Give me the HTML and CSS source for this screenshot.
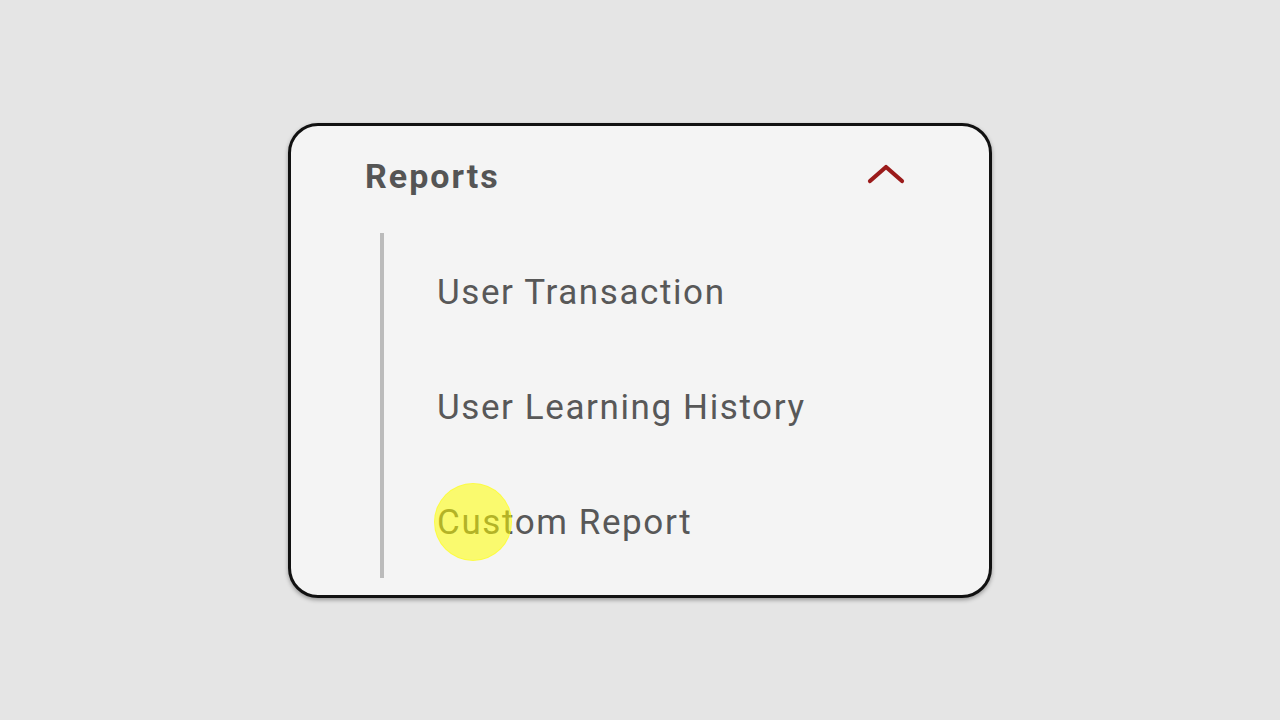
FILE: index.html
```html
<!DOCTYPE html>
<html>
<head>
<meta charset="utf-8">
<link rel="stylesheet" href="styles.css">
</head>
<body>
<div class="card">
  <div class="header">
    <span class="title">Reports</span>
    <svg class="chevron" width="38" height="22" viewBox="0 0 38 22"><path d="M3 18 L19 4 L35 18" fill="none" stroke="#9b1b1b" stroke-width="4.2" stroke-linecap="round" stroke-linejoin="round"/></svg>
  </div>
  <div class="list">
    <div class="item">User Transaction</div>
    <div class="item">User Learning History</div>
    <div class="item last"><span class="label">Custom Report<span class="cursor"></span></span></div>
  </div>
</div>
</body>
</html>
```
FILE: styles.css
```css
html, body { margin: 0; padding: 0; }
body {
  width: 1280px; height: 720px;
  background: #e5e5e5;
  display: flex; align-items: center; justify-content: center;
  font-family: Roboto, "Liberation Sans", sans-serif;
}
.card {
  box-sizing: border-box;
  width: 704px; height: 475px;
  background: #f4f4f4;
  border: 3px solid #111;
  border-radius: 30px;
  box-shadow: 0 2px 4px rgba(0,0,0,0.35);
  display: flex; flex-direction: column;
}
.header {
  box-sizing: border-box;
  display: flex; align-items: center; justify-content: space-between;
  height: 108px;
  padding: 0 84px 6px 74px;
}
.title {
  font-size: 34px; font-weight: 700; color: #555;
  letter-spacing: 2px;
}
.chevron { margin-top: -4px; }
.list {
  margin-left: 89px;
  margin-bottom: 17px;
  flex: 1;
  border-left: 4px solid #bbb;
  padding-left: 53px;
  display: flex; flex-direction: column;
}
.item {
  height: 115px;
  line-height: 119px;
  font-size: 35px;
  color: #585858;
  letter-spacing: 1.6px;
}
.label { position: relative; display: inline-block; }
.cursor {
  position: absolute;
  left: -3px; top: 50%;
  width: 78px; height: 78px;
  margin-top: -39px;
  border-radius: 50%;
  background: rgba(255, 255, 0, 0.55);
  border: 1px solid rgba(255,255,0,0.4);
  box-sizing: border-box;
}
```
